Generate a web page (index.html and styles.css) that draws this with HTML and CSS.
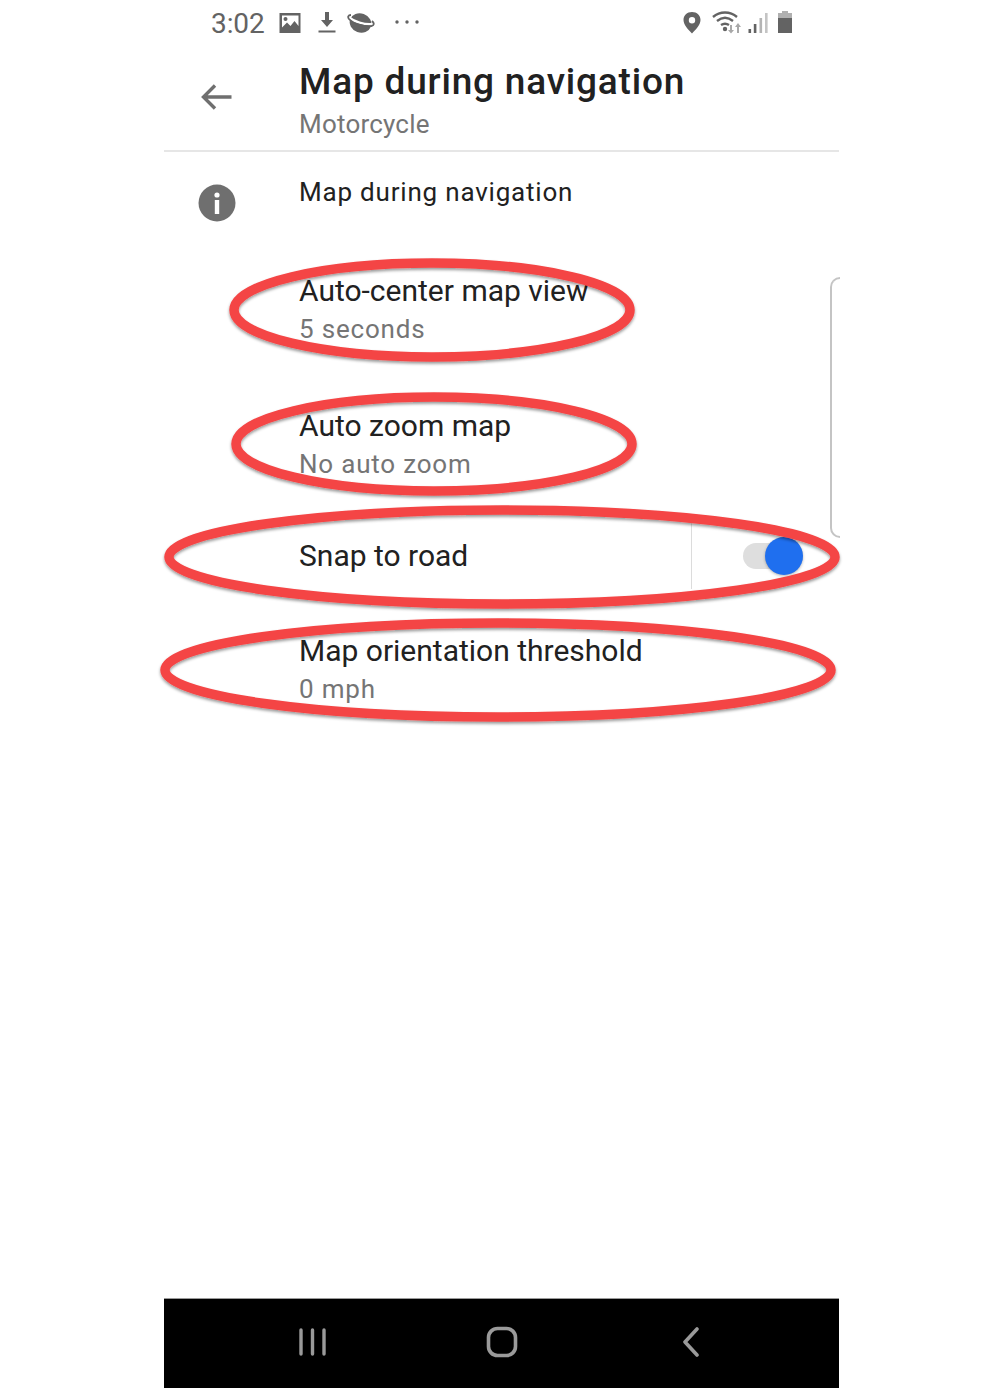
FILE: index.html
```html
<!DOCTYPE html>
<html lang="en">
<head>
<meta charset="utf-8">
<title>Map during navigation</title>
<link rel="stylesheet" href="styles.css">
</head>
<body>
<div class="phone">
  <div class="statusbar">
    <div class="status-left">
      <span class="clock">3:02</span>
      <svg class="ic-gallery" width="24" height="22" viewBox="0 0 24 22"><path fill="#636363" fill-rule="evenodd" d="M1.500 1h21v20h-21zM4 3.500v12l5-5 3.500 3.500 4-5 4 5v-10.500z"/><circle cx="7.500" cy="7" r="2" fill="#636363"/></svg>
      <svg class="ic-download" width="18" height="24" viewBox="0 0 18 24"><path fill="#636363" d="M7 1h4v8h4l-6 7-6-7h4z"/><rect x="0.500" y="19.500" width="17" height="2" fill="#636363"/></svg>
      <svg class="ic-planet" width="28" height="22" viewBox="0 0 28 22"><ellipse cx="13.500" cy="11" rx="11" ry="9.500" fill="#636363" transform="rotate(20 13.500 11)"/><path d="M2 5.500c5 4 15 7.500 24 6.500" fill="none" stroke="#fff" stroke-width="2.400"/><path d="M4 3C1 3 .5 5 2 7c4 4.500 15 8 22.500 7 3-.5 3-3 .5-5" fill="none" stroke="#636363" stroke-width="1.800"/></svg>
      <svg class="ic-dots" width="26" height="6" viewBox="0 0 26 6"><circle cx="3" cy="3" r="1.700" fill="#636363"/><circle cx="13" cy="3" r="1.700" fill="#636363"/><circle cx="23" cy="3" r="1.700" fill="#636363"/></svg>
    </div>
    <div class="status-right">
      <svg class="ic-pin" width="20" height="24" viewBox="0 0 20 24"><path fill="#636363" fill-rule="evenodd" d="M10 1c5 0 8.500 3.500 8.500 8 0 5-5 10-8.500 13.500C6.500 19 1.500 14 1.500 9c0-4.500 3.500-8 8.500-8zm0 5a3.200 3.200 0 1 0 0 6.400A3.200 3.200 0 0 0 10 6z"/></svg>
      <svg class="ic-wifi" width="32" height="24" viewBox="0 0 32 24"><g fill="none" stroke="#636363" stroke-width="2.400"><path d="M1 6c7-6 17-6 24 0"/><path d="M5 10c5-4 11-4 16 0"/><path d="M9 14c3-2 5-2 8 0"/></g><circle cx="13" cy="18" r="2.200" fill="#636363"/><path fill="#a8a8a8" d="M18 14h2v5h2l-3 3.500-3-3.500h2zM25 22h2v-6h2l-3-4-3 4h2z"/></svg>
      <svg class="ic-signal" width="22" height="24" viewBox="0 0 22 24"><rect x="1.500" y="18" width="2.600" height="4" fill="#636363"/><rect x="6.800" y="13" width="2.600" height="9" fill="#636363"/><rect x="12.500" y="7" width="2.600" height="15" fill="#b4b4b4"/><rect x="18" y="2" width="2.600" height="20" fill="#c4c4c4"/></svg>
      <svg class="ic-battery" width="16" height="24" viewBox="0 0 16 24"><path fill="#b0b0b0" d="M5 0h6v2h4v5H1V2h4z"/><rect x="1" y="7" width="14" height="15" fill="#636363"/></svg>
    </div>
  </div>

  <header class="appbar">
    <svg class="ic-back" width="34" height="30" viewBox="0 0 34 30"><path d="M31.500 15H3.500M15 3.500 3.500 15 15 26.500" fill="none" stroke="#6f6f6f" stroke-width="3.400"/></svg>
    <div class="appbar-text">
      <h1 class="title">Map during navigation</h1>
      <p class="subtitle">Motorcycle</p>
    </div>
  </header>

  <main class="list">
    <div class="info-row">
      <svg class="ic-info" width="38" height="38" viewBox="0 0 38 38"><circle cx="19" cy="19" r="18.500" fill="#6f6f6f"/><rect x="16.800" y="16" width="4.400" height="14" fill="#fff"/><circle cx="19" cy="11" r="2.600" fill="#fff"/></svg>
      <p class="info-text">Map during navigation</p>
    </div>
    <div class="row row-first">
      <p class="row-title">Auto-center map view</p>
      <p class="row-sub">5 seconds</p>
    </div>
    <div class="row row-second">
      <p class="row-title">Auto zoom map</p>
      <p class="row-sub">No auto zoom</p>
    </div>
    <div class="row-switch">
      <p class="row-title">Snap to road</p>
      <div class="switch-cell">
        <div class="switch"><span class="knob"></span></div>
      </div>
    </div>
    <div class="row row-last">
      <p class="row-title">Map orientation threshold</p>
      <p class="row-sub">0 mph</p>
    </div>
  </main>

  <nav class="navbar">
    <svg width="30" height="30" viewBox="0 0 30 30"><path d="M3 3v24M14.500 3v24M26 3v24" fill="none" stroke="#9a9a9a" stroke-width="3.400" stroke-linecap="round"/></svg>
    <svg class="nav-home" width="32" height="32" viewBox="0 0 32 32"><rect x="2.500" y="2.500" width="27" height="27" rx="9" fill="none" stroke="#9a9a9a" stroke-width="3.600"/></svg>
    <svg width="20" height="30" viewBox="0 0 20 30"><path d="M16 2 4 15l12 13" fill="none" stroke="#9a9a9a" stroke-width="3.600" stroke-linecap="round" stroke-linejoin="round"/></svg>
  </nav>
</div>

<div class="edge-bracket"></div>

<svg class="marks" width="1000" height="1388" viewBox="0 0 1000 1388">
  <g fill="none" stroke="#f44545" stroke-width="9.500" filter="url(#sh)">
    <ellipse cx="432" cy="310" rx="198" ry="47"/>
    <ellipse cx="434" cy="444" rx="198" ry="47"/>
    <ellipse cx="502" cy="557" rx="333" ry="47"/>
    <ellipse cx="498" cy="670" rx="333" ry="47"/>
  </g>
  <defs>
    <filter id="sh" x="-5%" y="-20%" width="110%" height="140%"><feDropShadow dx="0" dy="2" stdDeviation="1.500" flood-color="#000" flood-opacity=".4"/></filter>
  </defs>
</svg>
</body>
</html>
```
FILE: styles.css
```css
* { box-sizing: border-box; }
html, body { margin: 0; padding: 0; background: #fff; }
body { width: 1000px; height: 1388px; overflow: hidden; font-family: Roboto, "Liberation Sans", sans-serif; position: relative; }
p, h1 { margin: 0; }

.phone { width: 675px; height: 1388px; margin-left: 164px; display: flex; flex-direction: column; }

.statusbar { height: 48px; padding: 0 46px 2px 47px; display: flex; justify-content: space-between; align-items: center; }
.status-left, .status-right { display: flex; align-items: center; }
.clock { font-size: 28px; color: #636363; letter-spacing: -.1px; margin-right: 13px; }
.ic-download { margin-left: 16px; }
.ic-planet { margin-left: 11px; }
.ic-dots { margin-left: 19px; margin-top: -2px; }
.ic-wifi { margin-left: 10px; }
.ic-signal { margin-left: 3px; }
.ic-battery { margin-left: 8px; }

.appbar { height: 104px; padding: 0 0 0 36px; display: flex; align-items: flex-start; border-bottom: 2px solid #e6e6e6; }
.ic-back { margin-top: 34px; flex: none; }
.appbar-text { margin-left: 65px; padding-top: 11px; }
.title { font-size: 37px; line-height: 46px; font-weight: 500; color: #212121; letter-spacing: .800px; }
.subtitle { font-size: 26px; line-height: 36px; color: #757575; letter-spacing: .2px; margin-top: 1px; }

.list { flex: 1; display: flex; flex-direction: column; }
.info-row { height: 100px; padding-left: 34px; display: flex; align-items: flex-start; }
.ic-info { margin-top: 32px; flex: none; }
.info-text { margin-left: 63px; margin-top: 24px; font-size: 26px; line-height: 32px; color: #212121; letter-spacing: .800px; }

.row { padding-left: 135px; }
.row-first { margin-top: 20px; height: 135px; }
.row-second { height: 101px; }
.row-last { margin-top: 28px; }
.row-title { font-size: 30px; line-height: 38px; color: #212121; }
.row-sub { font-size: 26px; line-height: 36px; color: #757575; letter-spacing: .8px; margin-top: 1px; }

.row-switch { height: 96px; padding-left: 135px; display: flex; align-items: center; justify-content: space-between; }
.switch-cell { width: 148px; height: 66px; border-left: 1px solid #dcdcdc; display: flex; align-items: center; padding-left: 51px; }
.switch { width: 60px; height: 26px; border-radius: 13px; background: #dedede; position: relative; }
.knob { position: absolute; right: 0; top: -6px; width: 38px; height: 38px; border-radius: 50%; background: #1f6fef; box-shadow: 0 1px 3px rgba(0,0,0,.3); }

.navbar { height: 90px; background: #000; border-top: 1px solid #9a9a9a; display: flex; align-items: center; justify-content: space-between; padding: 0 138px 4px 134px; }
.nav-home { margin-right: 5px; }

.edge-bracket { position: absolute; left: 830px; top: 277px; width: 10px; height: 261px; border: 2px solid #c4c4c4; border-right: 0; border-radius: 10px 0 0 10px; }

.marks { position: absolute; left: 0; top: 0; pointer-events: none; }
```
